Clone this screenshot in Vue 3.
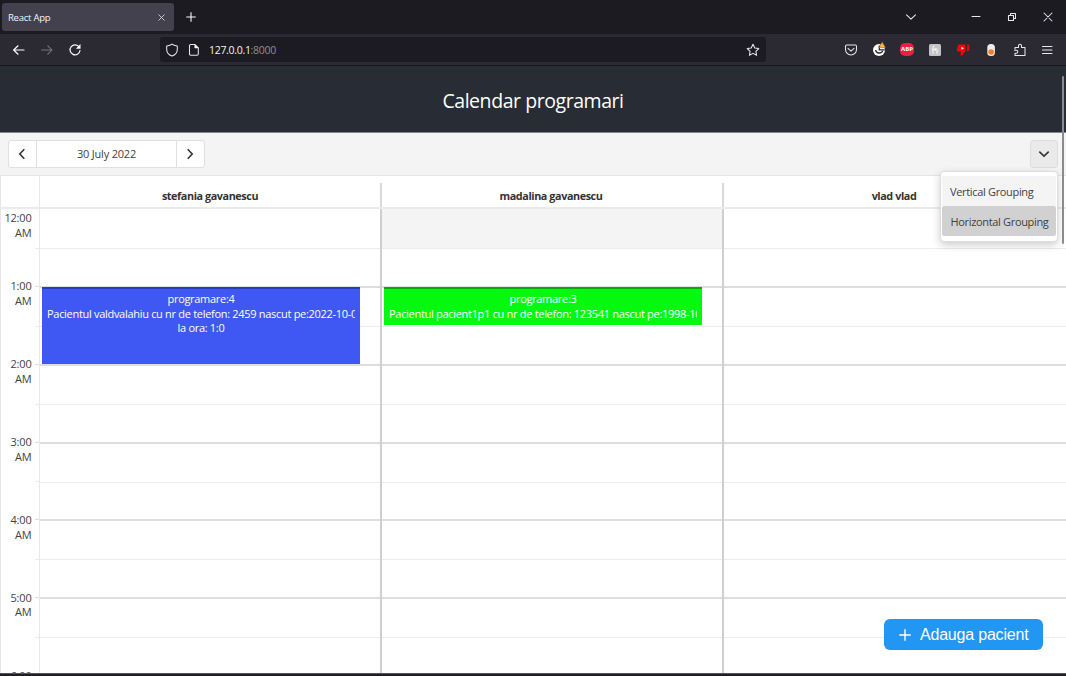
<script setup>
const doctors = ['stefania gavanescu', 'madalina gavanescu', 'vlad vlad']
const hours = ['12:00', '1:00', '2:00', '3:00', '4:00', '5:00', '6:00']
const menu = ['Vertical Grouping', 'Horizontal Grouping']
</script>

<template>
  <div class="window">
    <div class="tabbar">
      <div class="tab">
        <span class="tab-title">React App</span>
        <svg width="7" height="7" viewBox="0 0 7 7"><path d="M.5 .5l6 6M6.500 .5l-6 6" stroke="#d6d5dc" stroke-width=".9" /></svg>
      </div>
      <svg class="plus" width="10" height="10" viewBox="0 0 10 10"><path d="M5 .3v9.400M.3 5h9.400" stroke="#fbfbfe" stroke-width="1.100" /></svg>
      <div class="window-controls">
        <svg width="10" height="10" viewBox="0 0 10 10"><path d="M.5 2.800L5 7.200 9.500 2.800" class="line" /></svg>
        <svg class="min" width="10" height="10" viewBox="0 0 10 10"><path d="M1 4.500h8" class="line" /></svg>
        <svg class="restore" width="10" height="10" viewBox="0 0 10 10"><path d="M1.500 3.500h5v5h-5zM3.500 3.500v-2h5v5h-2" class="line" /></svg>
        <svg class="close" width="10" height="10" viewBox="0 0 10 10"><path d="M1 1l8 8M9 1L1 9" class="line" /></svg>
      </div>
    </div>

    <div class="navbar">
      <svg class="back" width="14" height="12" viewBox="0 0 14 12"><path d="M12 6H1.500M6 1.800L1.700 6 6 10.200" class="line strong" /></svg>
      <svg class="forward" width="14" height="12" viewBox="0 0 14 12"><path d="M1.500 6H12M7.800 1.800L12 6l-4.200 4.200" class="line dim" /></svg>
      <svg class="reload" width="14" height="14" viewBox="0 0 14 14"><path d="M11.200 4A5 5 0 1 0 12 7.500" class="line strong" /><path d="M12.500 1v4.800H7.800z" fill="#fbfbfe" /></svg>
      <div class="urlbar">
        <svg width="14" height="14" viewBox="0 0 14 14"><path d="M7 1.100C5.500 2.400 3.700 2.700 1.700 2.900V6.500C1.800 9.700 4 12 7 13.100 10 12 12.200 9.700 12.300 6.500V2.900C10.300 2.700 8.500 2.400 7 1.100z" class="line" /></svg>
        <svg class="page-icon" width="12" height="14" viewBox="0 0 12 14"><path d="M2.800 1.500H7L10.300 4.800V11q0 1.300-1.300 1.300H2.800Q1.500 12.300 1.500 11V2.800Q1.500 1.500 2.800 1.500z" class="line" /><path d="M6.500 1l4.300 4.300H6.500z" fill="#fbfbfe" /></svg>
        <span class="url">127.0.0.1<i>:8000</i></span>
        <svg class="star" width="14" height="14" viewBox="0 0 14 14"><path d="M7 1.200l1.800 3.700 4 .6-2.900 2.800.7 4L7 10.400l-3.600 1.900.7-4L1.200 5.500l4-.6z" class="line" /></svg>
      </div>
      <div class="extensions">
        <svg width="14" height="14" viewBox="0 0 14 14"><path d="M2.700 2h8.600q1.200 0 1.200 1.200V6.500a5.500 5.500 0 0 1-11 0V3.200Q1.500 2 2.700 2zM4 5.300l3 2.800 3-2.800" class="line" /></svg>
        <svg class="grammar" width="14" height="16" viewBox="0 0 14 16"><circle cx="7" cy="9" r="6" fill="#fff" /><path d="M7.300 4.500v4.300h5.500" stroke="#2b2a33" stroke-width="1.300" fill="none" /><path d="M3.600 9.200q.5 2.800 3.500 2.800t3.600-2.400" fill="none" stroke="#2b2a33" stroke-width="1.300" /><path d="M10.200 .8l3.500 5.900H6.900z" fill="#ffb43b" stroke="#4a3924" stroke-width=".4" /></svg>
        <span class="abp">ABP</span>
        <svg width="14" height="14" viewBox="0 0 14 14"><rect x="1" y="1" width="12" height="12" rx="1.500" fill="#c3c3c3" /><path d="M5 11V4.200q0-1.300 1.500-1M4 6.300h3.500M7.300 5v2.500q1.700-.5 1.700-2.300M9 7.500V11M9 8h1.500" stroke="#f8f8f8" fill="none" /></svg>
        <svg width="14" height="14" viewBox="0 0 14 14"><path d="M3 1.500h6.500V8L6 12.500 4.300 12l.9-3.500H2Q.4 8 1 6.200L2 2.400Q2.300 1.500 3 1.500zM11.200 1.500h2V8h-2z" fill="#f00" /><path d="M5.500 3.700v3L8 5.200z" fill="#fff" /></svg>
        <svg width="14" height="14" viewBox="0 0 14 14"><rect x="3.300" y="1" width="7.600" height="12" rx="3.500" fill="#f0ece7" /><circle cx="7.100" cy="9" r="2.800" fill="#f57c2a" /></svg>
        <svg class="puzzle" width="14" height="14" viewBox="0 0 14 14"><path d="M2 6V4.500h3.500V2.700a1.500 1.500 0 0 1 3 0V4.500H12v8H2V10.300h1.300a1.500 1.500 0 0 0 0-3H1.500" class="line" /></svg>
        <svg width="14" height="14" viewBox="0 0 14 14"><path d="M2.500 3.500h9.500M2.500 7h9.500M2.500 10.500h9.500" class="line" /></svg>
      </div>
    </div>

    <header class="title"><span>Calendar programari</span></header>

    <div class="toolbar">
      <div class="date-nav">
        <button><svg width="10" height="12" viewBox="0 0 10 12"><path d="M7.300 1.300L2.800 6l4.500 4.700" class="arrow" /></svg></button>
        <span class="date">30 July 2022</span>
        <button><svg width="10" height="12" viewBox="0 0 10 12"><path d="M2.700 1.300L7.200 6l-4.500 4.700" class="arrow" /></svg></button>
      </div>
      <div class="switcher">
        <svg width="12" height="10" viewBox="0 0 12 10"><path d="M1.300 2.700L6 7.200l4.700-4.500" class="arrow" /></svg>
        <div class="menu">
          <div v-for="(item, i) in menu" :key="item" class="item" :class="{ active: i === 1 }"><span>{{ item }}</span></div>
        </div>
      </div>
    </div>

    <div class="head">
      <div class="corner"></div>
      <div v-for="d in doctors" :key="d" class="doctor">{{ d }}</div>
    </div>

    <main class="schedule">
      <div v-for="(h, hi) in hours" :key="h" class="hour">
        <div class="gutter">
          <div class="label">{{ h }}<br />AM</div>
          <div class="tick"></div>
        </div>
        <div v-for="(d, di) in doctors" :key="d" class="cell">
          <div class="half" :class="{ selected: hi === 0 && di === 1 }"></div>
          <div v-if="hi === 1 && di === 0" class="event blue">
            <div>programare:4</div>
            <div class="clip">Pacientul valdvalahiu cu nr de telefon: 2459 nascut pe:2022-10-0</div>
            <div>la ora: 1:0</div>
          </div>
          <div v-if="hi === 1 && di === 1" class="event green">
            <div>programare:3</div>
            <div class="clip">Pacientul pacient1p1 cu nr de telefon: 123541 nascut pe:1998-10</div>
            <div>la ora: 1:0</div>
          </div>
        </div>
      </div>
    </main>
    <div class="bottom"></div>

    <button class="add">
      <svg width="12" height="12" viewBox="0 0 12 12"><path d="M6 .3v11.400M.3 6h11.400" stroke="#fff" stroke-width="1.400" /></svg>
      <span>Adauga pacient</span>
    </button>
    <div class="scrollbar"></div>
  </div>
</template>

<style>
body { margin: 0; overflow: hidden; }
</style>

<style scoped>
* { box-sizing: border-box; }
.window { position: relative; display: flex; flex-direction: column; width: 1066px; height: 676px; overflow: hidden; background: #fff; font-family: "Open Sans", "Noto Sans", sans-serif; font-size: 11px; color: #424242; }
svg { display: block; flex: none; }
button { font: inherit; border: 0; padding: 0; background: none; }
.line { fill: none; stroke: #e6e6ec; stroke-width: 1.050; stroke-linejoin: round; stroke-linecap: round; }
.strong { stroke: #fbfbfe; stroke-width: 1.200; }
.dim { stroke: #77767e; }

.tabbar { display: flex; align-items: center; height: 34px; flex: none; background: #1c1b22; padding-left: 2px; }
.tab { display: flex; align-items: center; justify-content: space-between; width: 172px; height: 28px; border-radius: 3px; background: #42414d; padding: 0 9px 0 6px; color: #f4f4f8; }
.tab-title { font-size: 9.500px; letter-spacing: -.25px; line-height: 14px; padding-top: 1px; }
.plus { margin: 0 0 0 12px; }
.window-controls { display: flex; margin-left: auto; padding-right: 13px; }
.min { margin-left: 55px; }
.restore { margin-left: 26px; }
.close { margin-left: 26px; }

.navbar { display: flex; align-items: center; height: 32px; flex: none; background: #2b2a33; border-bottom: 1px solid #16151b; padding-left: 12px; }
.forward { margin-left: 14px; }
.reload { margin-left: 14px; }
.urlbar { display: flex; align-items: center; width: 606px; height: 25px; margin-left: 78px; border-radius: 3px; background: #1c1b22; padding: 0 6px 0 5px; }
.page-icon { margin-left: 9px; }
.url { margin-left: 9px; padding-top: 1px; font-size: 10.500px; letter-spacing: -.3px; color: #f4f4f8; }
.url i { font-style: normal; color: #8f8e96; }
.star { margin-left: auto; }
.extensions { display: flex; align-items: center; gap: 14px; margin-left: auto; padding-right: 12px; }
.grammar { margin-top: -1px; }
.puzzle { margin-right: -1px; margin-left: 1px; }
.abp { width: 14px; height: 13px; border-radius: 5px; background: #ed1e45; color: #fff; font-size: 6px; font-weight: 700; line-height: 13px; text-align: center; }

.title { display: flex; align-items: center; justify-content: center; height: 67px; flex: none; background: #282c34; border-bottom: 1px solid #85858b; color: #fff; font-size: 19.500px; padding-top: 2px; }
.title span { letter-spacing: -.44px; }

.toolbar { display: flex; align-items: center; justify-content: space-between; height: 43px; flex: none; background: #f4f4f4; border-bottom: 1px solid #e4e4e4; padding: 0 8px; }
.date-nav { display: flex; width: 197px; height: 28px; border: 1px solid #e0e0e0; border-radius: 3px; background: #fff; }
.date-nav button { display: flex; align-items: center; justify-content: center; width: 27px; padding-right: 1px; }
.date { flex: 1; border: solid #e0e0e0; border-width: 0 1px; text-align: center; line-height: 26px; letter-spacing: -.2px; }
.arrow { fill: none; stroke: #333; stroke-width: 1.600; }
.switcher { position: relative; display: flex; align-items: center; justify-content: center; width: 28px; height: 28px; border: 1px solid #dedede; border-radius: 3px; background: #eaeaea; }
.menu { position: absolute; z-index: 3; right: -1px; top: 30px; width: 118px; height: 71px; padding: 4px 1px 5px; background: #fff; border: 1px solid #ddd; border-radius: 4px; box-shadow: 0 3px 8px rgba(0, 0, 0, .2); }
.item { height: 30px; line-height: 32px; padding-left: 8px; background: #f4f4f4; white-space: nowrap; }
.item span { letter-spacing: -.33px; }
.item.active { background: #d1d1d1; border-radius: 2px; padding-left: 8.500px; }

.head { display: grid; grid-template-columns: 39px 340px 342px 344px; height: 33px; flex: none; align-items: end; border-left: 1px solid #e6e6e6; border-bottom: 2px solid #ebebeb; }
.corner { height: 31px; border-right: 1px solid #e8e8e8; }
.doctor { height: 24px; line-height: 25px; text-align: center; font-size: 10.800px; font-weight: 700; letter-spacing: -.41px; color: #333; }
.doctor + .doctor { border-left: 2px solid #d8d8d8; padding-right: 2px; }

.schedule { flex: 1; min-height: 0; overflow: hidden; border-left: 1px solid #e6e6e6; }
.hour { display: grid; grid-template-columns: 39px 340px 342px 344px; height: 77.870px; border-bottom: 2px solid #dedede; }
.hour:first-child { height: 78.800px; }
.gutter { position: relative; border-right: 1px solid #e8e8e8; margin-bottom: -2px; background: #fff; }
.label { position: absolute; right: 7.500px; top: -8.500px; text-align: right; line-height: 14.700px; letter-spacing: -.2px; }
.hour:first-child .label { top: 2px; }
.tick { position: absolute; right: 0; bottom: 1px; width: 4px; height: 39px; border: solid #dedede; border-width: 1px 0; border-top-color: #ececec; }
.cell { position: relative; min-width: 0; }
.cell + .cell { border-left: 2px solid #cfcfcf; margin-bottom: -2px; }
.half { height: 39px; border-bottom: 1px solid #ececec; }
.hour:first-child .half { height: 39.500px; }
.selected { background: #f4f4f4; }
.event { position: absolute; z-index: 1; left: 2px; top: -1px; width: 318px; height: 77px; padding: 3px 5px 0; overflow: hidden; color: #fff; text-align: center; line-height: 14.700px; letter-spacing: -.3px; }
.event.blue { background: #3f58f3; border-top: 2px solid #2b3db4; }
.event.green { height: 38px; background: #05f90f; border-top: 2px solid #03ac0a; }
.clip { white-space: nowrap; overflow: hidden; text-align: left; }
.event.green .clip { padding-bottom: 1px; }
.bottom { height: 3px; flex: none; background: #202024; border-top: 1px solid #55555a; }

.add { position: absolute; z-index: 4; left: 884px; top: 619px; display: flex; align-items: center; width: 159px; height: 31px; padding-left: 15px; border-radius: 6px; background: #2196f3; color: #fff; font-family: "Liberation Sans", Arial, sans-serif; font-size: 16px; }
.add span { margin-left: 9px; white-space: nowrap; letter-spacing: -.2px; }
.scrollbar { position: absolute; z-index: 5; right: 2px; top: 76px; width: 2px; height: 168px; border-radius: 1px; background: #8b8b8d; }
</style>
